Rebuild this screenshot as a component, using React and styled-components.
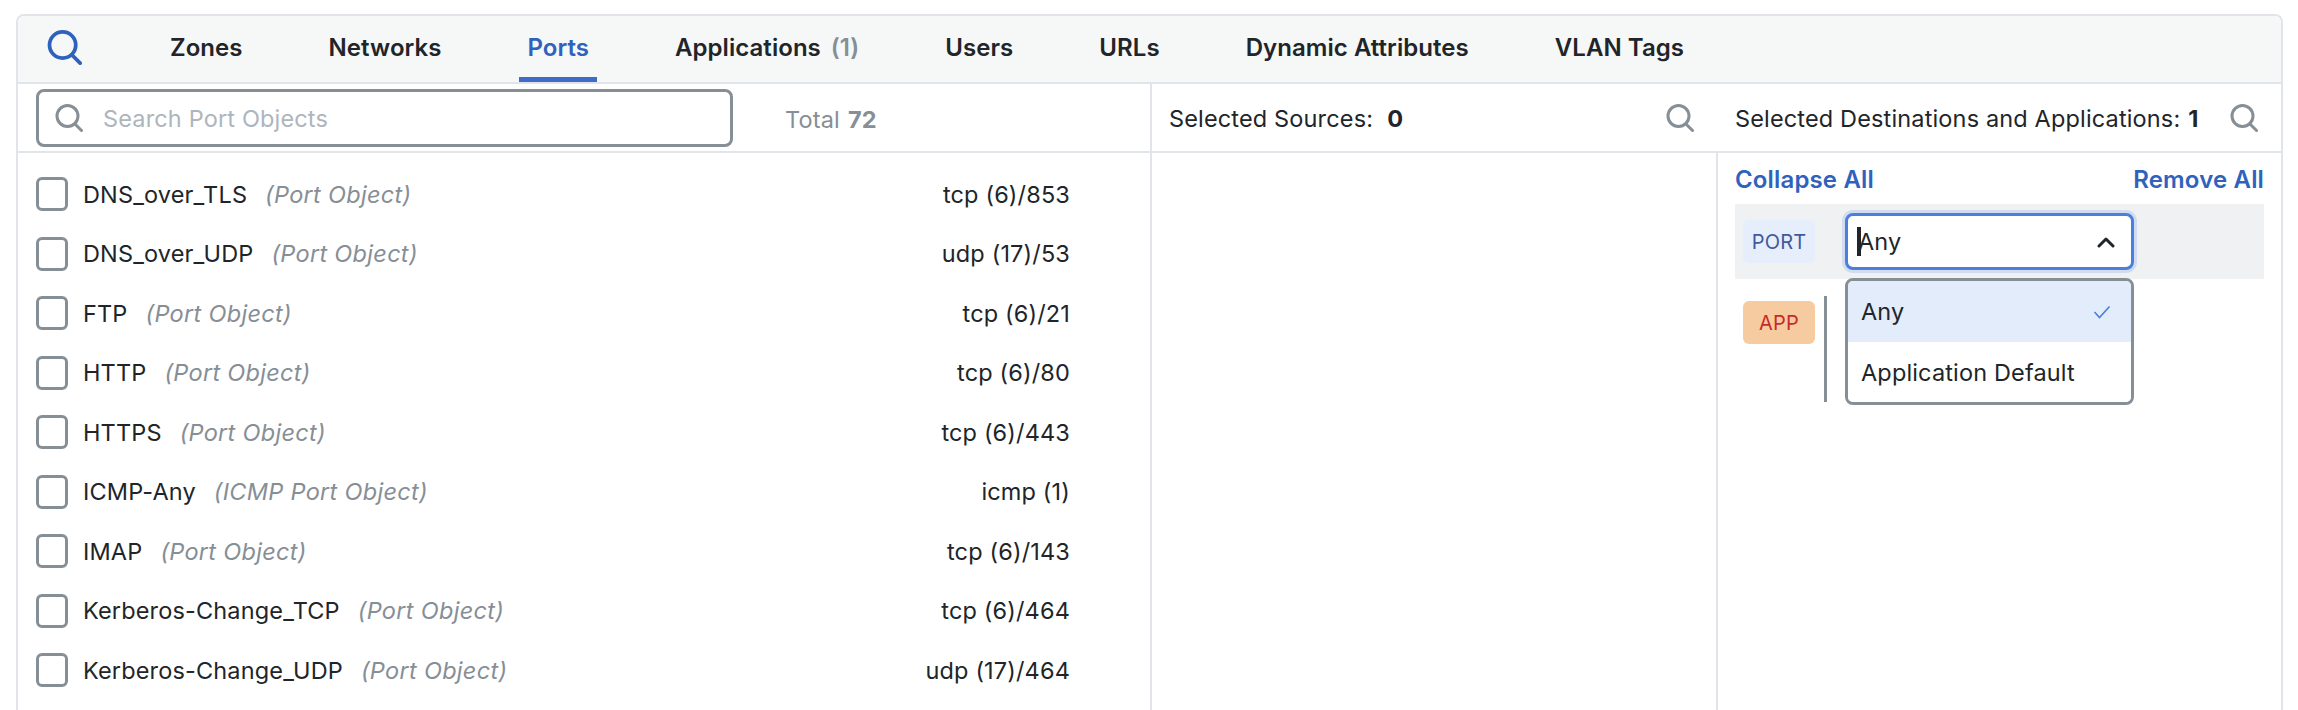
import React from "react";
import styled, { createGlobalStyle } from "styled-components";

const Global = createGlobalStyle`
  html, body { margin: 0; padding: 0; background: #fff; height: 710px; overflow: hidden; }
  body { font-family: Inter, "Liberation Sans", sans-serif; color: #212529; font-size: 23.5px; letter-spacing: 0.15px; }
  * { box-sizing: border-box; }
`;

const Page = styled.div`
  padding: 14px 15px 0 16px;
  height: 710px;
  overflow: hidden;
`;
const Card = styled.div`
  border: 2px solid #e1e5ea;
  border-bottom: 0;
  border-radius: 8px 8px 0 0;
  height: 696px;
  display: flex;
  flex-direction: column;
  overflow: hidden;
`;
const TabBar = styled.div`
  height: 68px;
  flex: none;
  background: #f6f7f7;
  border-bottom: 2px solid #e1e5ea;
  display: flex;
  align-items: stretch;
  padding-left: 29px;
`;
const TabIcon = styled.div`
  width: 115px;
  flex: none;
  display: flex;
  align-items: center;
  padding-bottom: 3px;
`;
const Tabs = styled.div`
  display: flex;
  gap: 70px;
`;
const Tab = styled.div`
  padding: 2px 8px 0;
  display: flex;
  align-items: center;
  font-size: 24px;
  font-weight: 600;
  letter-spacing: 0.05px;
  white-space: nowrap;
  color: ${(p) => (p.$active ? "#2f62bd" : "#212529")};
  border-bottom: 5px solid ${(p) => (p.$active ? "#3f6cc9" : "transparent")};
`;
const Count = styled.span`
  color: #868e96;
  margin-left: 10px;
`;
const Body = styled.div`
  flex: 1;
  min-height: 0;
  display: grid;
  grid-template-columns: 1132px 1fr;
`;
const LeftPane = styled.div`
  display: flex;
  flex-direction: column;
  min-width: 0;
`;
const SearchBar = styled.div`
  height: 69px;
  flex: none;
  border-bottom: 2px solid #e1e5ea;
  display: flex;
  align-items: flex-start;
  padding: 5px 0 0 18px;
`;
const SearchBox = styled.div`
  width: 697px;
  height: 58px;
  border: 3px solid #868e96;
  border-radius: 8px;
  display: flex;
  align-items: center;
  gap: 20px;
  padding-left: 16px;
  flex: none;
`;
const Placeholder = styled.span`
  color: #adb5bd;
`;
const Total = styled.div`
  margin-left: 52px;
  height: 58px;
  display: flex;
  align-items: center;
  gap: 8px;
  color: #868e96;
  padding-top: 3px;
`;
const TotalNum = styled.b`
  font-weight: 700;
`;
const List = styled.div`
  padding: 11.5px 80px 0 18px;
  display: flex;
  flex-direction: column;
`;
const Row = styled.div`
  height: 59.5px;
  flex: none;
  display: flex;
  align-items: center;
`;
const Check = styled.span`
  width: 32px;
  height: 34px;
  flex: none;
  border: 3px solid #868e96;
  border-radius: 6px;
  margin-right: 15px;
`;
const Name = styled.span`
  white-space: nowrap;
`;
const Kind = styled.span`
  font-style: italic;
  letter-spacing: 0.3px;
  color: #868e96;
  margin-left: 18px;
  white-space: nowrap;
`;
const Value = styled.span`
  margin-left: auto;
  white-space: nowrap;
`;
const RightPane = styled.div`
  border-left: 2px solid #e1e5ea;
  display: flex;
  flex-direction: column;
  min-width: 0;
`;
const SelectedHead = styled.div`
  height: 69px;
  flex: none;
  border-bottom: 2px solid #e1e5ea;
  display: grid;
  grid-template-columns: 565px 1fr;
  align-items: center;
`;
const HeadCell = styled.div`
  display: flex;
  align-items: center;
  padding-left: ${(p) => p.$pl}px;
  padding-right: ${(p) => p.$pr}px;
  padding-top: 1px;
  white-space: nowrap;
`;
const HeadNum = styled.b`
  font-weight: 700;
  margin-left: ${(p) => p.$ml}px;
`;
const HeadIcon = styled.span`
  margin-left: auto;
  display: flex;
`;
const SelectedBody = styled.div`
  flex: 1;
  display: grid;
  grid-template-columns: 564px 1fr;
  min-height: 0;
`;
const SourcePane = styled.div``;
const DestPane = styled.div`
  border-left: 2px solid #e1e5ea;
  padding: 0 17px 0 17px;
  display: flex;
  flex-direction: column;
`;
const Actions = styled.div`
  height: 51px;
  flex: none;
  display: flex;
  justify-content: space-between;
  align-items: center;
  padding-top: 2px;
  color: #2f62bd;
  font-size: 24px;
  font-weight: 600;
`;
const PortRow = styled.div`
  height: 75px;
  flex: none;
  background: #eff1f3;
  display: flex;
  align-items: center;
  padding-left: 8px;
`;
const Badge = styled.span`
  width: 72px;
  height: 43px;
  flex: none;
  border-radius: 6px;
  display: flex;
  align-items: center;
  justify-content: center;
  font-size: 20px;
  background: ${(p) => p.$bg};
  color: ${(p) => p.$fg};
`;
const SelectWrap = styled.div`
  position: relative;
  margin-left: 30px;
  width: 289px;
  flex: none;
`;
const SelectBox = styled.div`
  height: 57px;
  background: #fff;
  border: 3px solid #4a7fdb;
  border-radius: 8px;
  box-shadow: 0 0 0 3px #d2dcf0;
  display: flex;
  align-items: center;
  padding: 0 16px 0 9px;
`;
const Caret = styled.span`
  width: 4px;
  height: 29px;
  background: #212529;
  flex: none;
  margin-right: -3px;
`;
const ChevronSlot = styled.span`
  margin-left: auto;
  display: flex;
`;
const Menu = styled.div`
  position: absolute;
  top: 65px;
  left: 0;
  width: 289px;
  height: 127px;
  background: #fff;
  border: 3px solid #868e96;
  border-radius: 8px;
  overflow: hidden;
  z-index: 2;
`;
const Option = styled.div`
  height: 61px;
  display: flex;
  align-items: center;
  padding: 0 20px 0 13px;
  background: ${(p) => (p.$selected ? "#e3ecfb" : "#fff")};
`;
const AppRow = styled.div`
  display: flex;
  align-items: flex-start;
  padding: 17px 0 0 8px;
`;
const Rule = styled.span`
  width: 3px;
  height: 106px;
  background: #868e96;
  margin-left: 9px;
  flex: none;
`;
const AppBadgeWrap = styled.div`
  padding-top: 5px;
  flex: none;
`;

const SearchIcon = ({ size = 28, color = "#868e96", width = 3 }) => (
  <svg width={size} height={size} viewBox="0 0 28 28" fill="none" stroke={color} strokeWidth={width} strokeLinecap="round">
    <circle cx="12.5" cy="12" r="10.5" />
    <path d="M20 20 L26.5 26.5" />
  </svg>
);

const rows = [
  ["DNS_over_TLS", "(Port Object)", "tcp (6)/853"],
  ["DNS_over_UDP", "(Port Object)", "udp (17)/53"],
  ["FTP", "(Port Object)", "tcp (6)/21"],
  ["HTTP", "(Port Object)", "tcp (6)/80"],
  ["HTTPS", "(Port Object)", "tcp (6)/443"],
  ["ICMP-Any", "(ICMP Port Object)", "icmp (1)"],
  ["IMAP", "(Port Object)", "tcp (6)/143"],
  ["Kerberos-Change_TCP", "(Port Object)", "tcp (6)/464"],
  ["Kerberos-Change_UDP", "(Port Object)", "udp (17)/464"],
];

export default function App() {
  return (
    <>
      <Global />
      <Page>
        <Card>
          <TabBar>
            <TabIcon>
              <SearchIcon size={35} color="#2f62bd" width={3} />
            </TabIcon>
            <Tabs>
              <Tab>Zones</Tab>
              <Tab>Networks</Tab>
              <Tab $active>Ports</Tab>
              <Tab>Applications<Count>(1)</Count></Tab>
              <Tab>Users</Tab>
              <Tab>URLs</Tab>
              <Tab>Dynamic Attributes</Tab>
              <Tab>VLAN Tags</Tab>
            </Tabs>
          </TabBar>
          <Body>
            <LeftPane>
              <SearchBar>
                <SearchBox>
                  <SearchIcon />
                  <Placeholder>Search Port Objects</Placeholder>
                </SearchBox>
                <Total>Total <TotalNum>72</TotalNum></Total>
              </SearchBar>
              <List>
                {rows.map((r) => (
                  <Row key={r[0]}>
                    <Check />
                    <Name>{r[0]}</Name>
                    <Kind>{r[1]}</Kind>
                    <Value>{r[2]}</Value>
                  </Row>
                ))}
              </List>
            </LeftPane>
            <RightPane>
              <SelectedHead>
                <HeadCell $pl={17} $pr={23}>
                  Selected Sources:<HeadNum $ml={14}>0</HeadNum>
                  <HeadIcon><SearchIcon /></HeadIcon>
                </HeadCell>
                <HeadCell $pl={18} $pr={23}>
                  Selected Destinations and Applications:<HeadNum $ml={8}>1</HeadNum>
                  <HeadIcon><SearchIcon /></HeadIcon>
                </HeadCell>
              </SelectedHead>
              <SelectedBody>
                <SourcePane />
                <DestPane>
                  <Actions><span>Collapse All</span><span>Remove All</span></Actions>
                  <PortRow>
                    <Badge $bg="#e6eefc" $fg="#3f5a9e">PORT</Badge>
                    <SelectWrap>
                      <SelectBox>
                        <Caret />
                        <span>Any</span>
                        <ChevronSlot>
                          <svg width="18" height="12" viewBox="0 0 18 12" fill="none" stroke="#212529" strokeWidth="3" strokeLinecap="round" strokeLinejoin="round">
                            <path d="M2 10 L9 3 L16 10" />
                          </svg>
                        </ChevronSlot>
                      </SelectBox>
                      <Menu>
                        <Option $selected>
                          <span>Any</span>
                          <ChevronSlot>
                            <svg width="18" height="14" viewBox="0 0 18 14" fill="none" stroke="#4a7fdb" strokeWidth="1.6">
                              <path d="M1.5 7 L6.5 12.5 L16.5 1.5" />
                            </svg>
                          </ChevronSlot>
                        </Option>
                        <Option>Application Default</Option>
                      </Menu>
                    </SelectWrap>
                  </PortRow>
                  <AppRow>
                    <AppBadgeWrap><Badge $bg="#f7cba0" $fg="#c92a2a">APP</Badge></AppBadgeWrap>
                    <Rule />
                  </AppRow>
                </DestPane>
              </SelectedBody>
            </RightPane>
          </Body>
        </Card>
      </Page>
    </>
  );
}
